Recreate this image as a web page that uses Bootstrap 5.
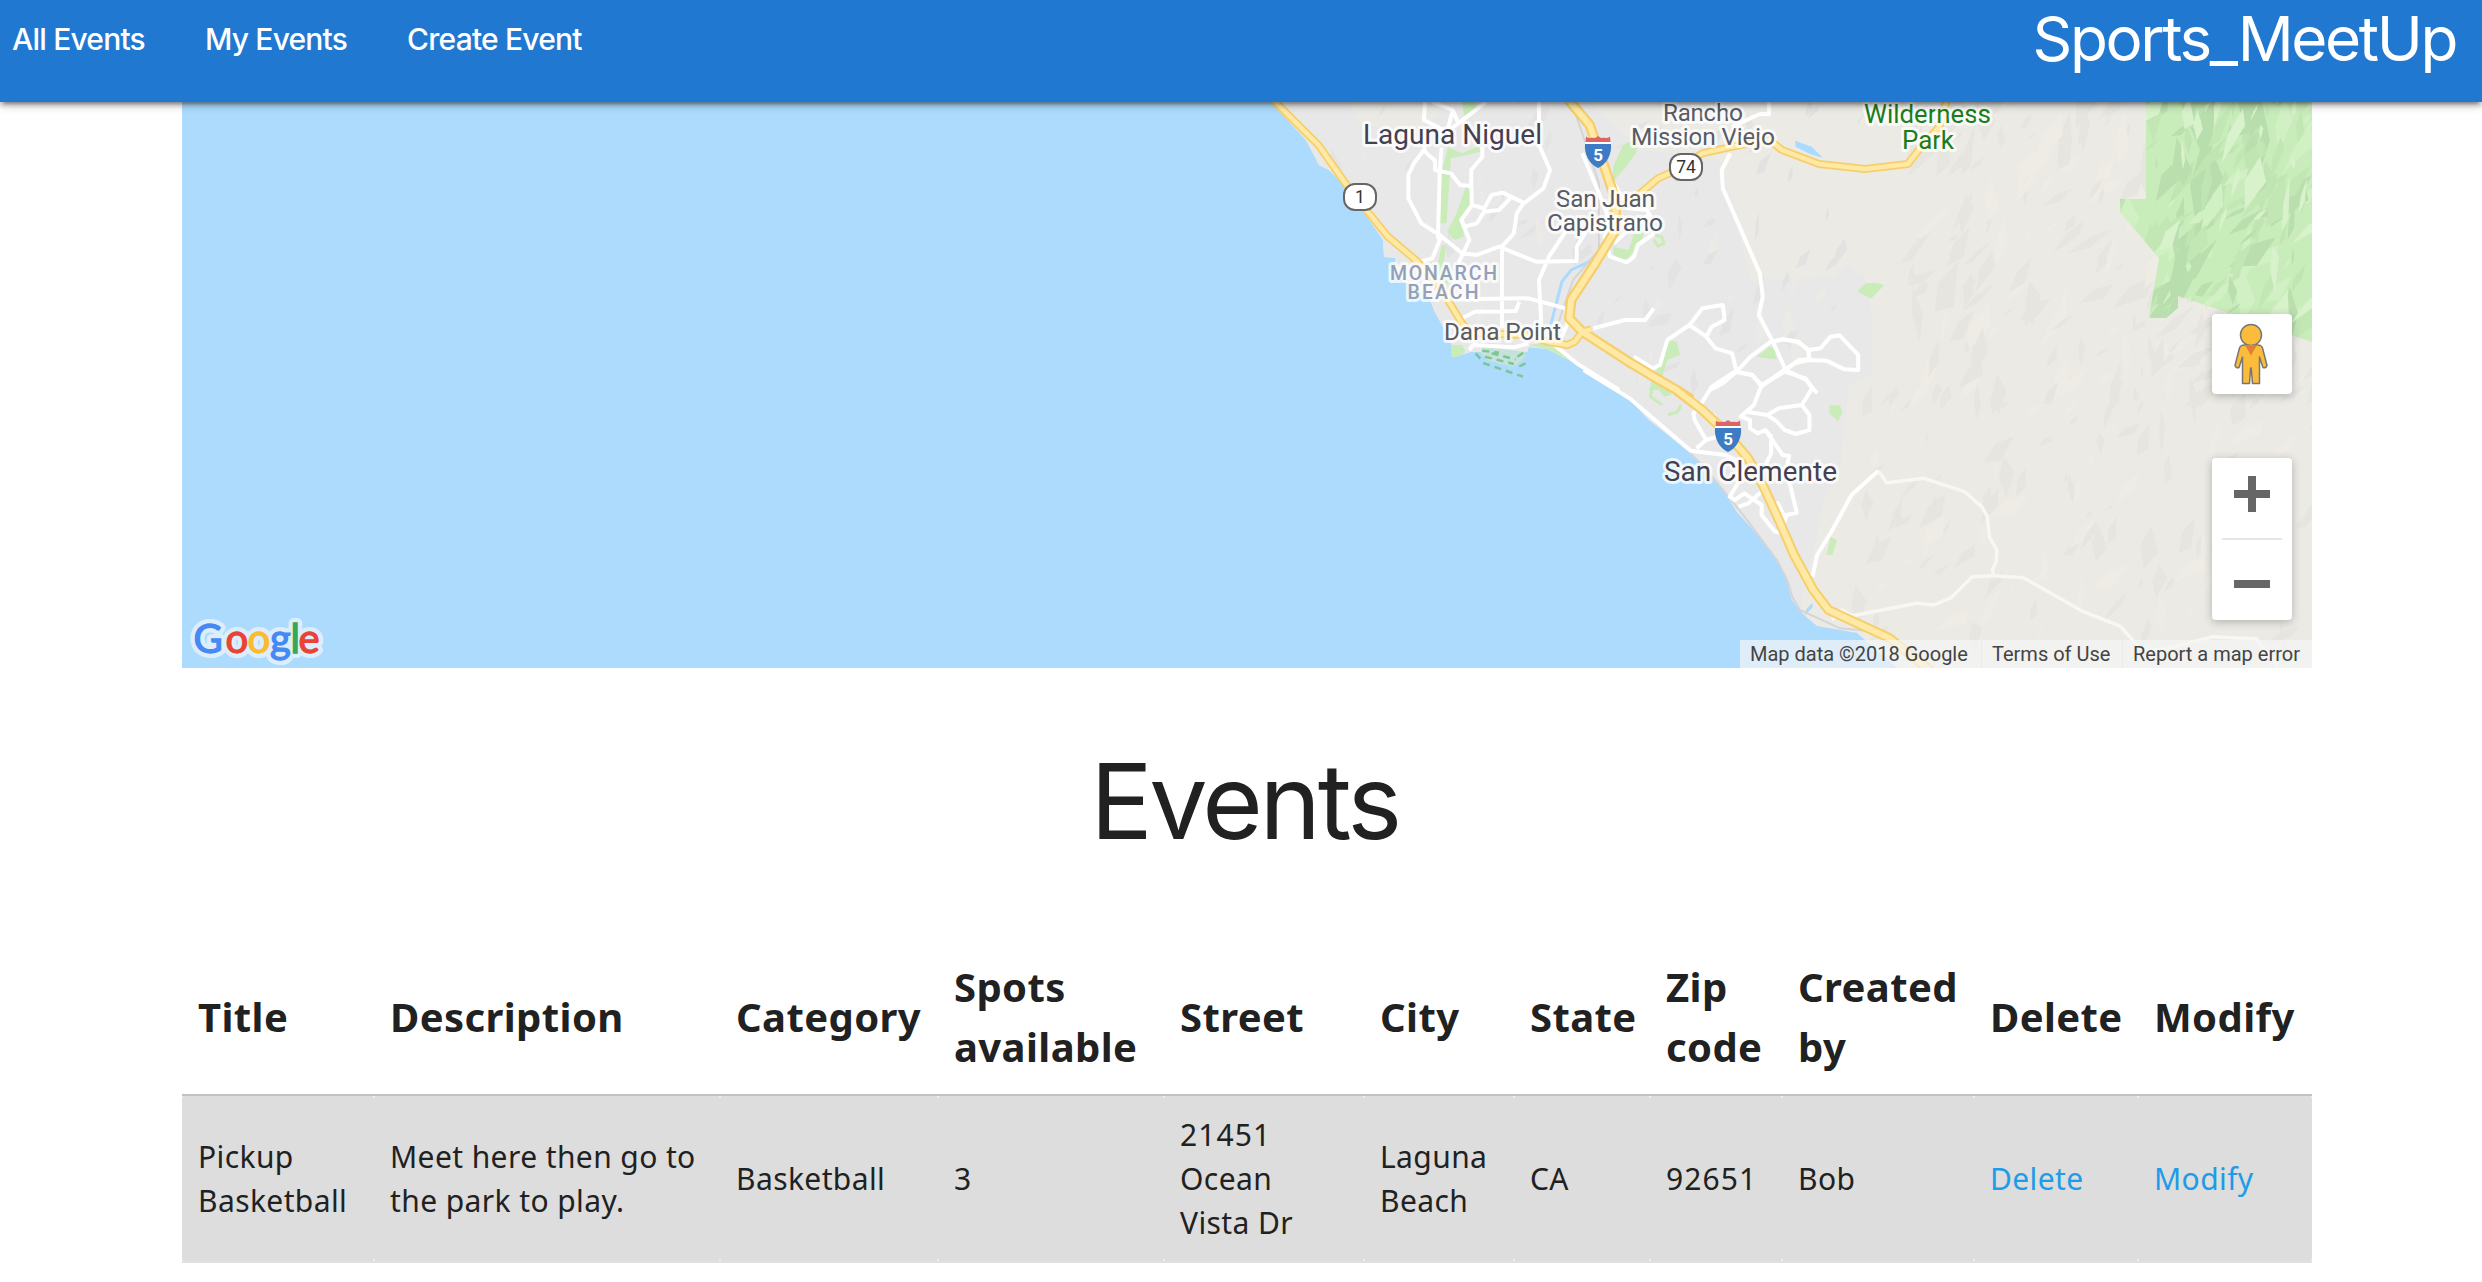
<!DOCTYPE html>
<html lang="en">
<head>
<meta charset="utf-8">
<meta name="viewport" content="width=device-width, initial-scale=1">
<title>Sports_MeetUp</title>
<link rel="stylesheet" href="https://cdn.jsdelivr.net/npm/bootstrap@5.3.0/dist/css/bootstrap.min.css">
<style>
  body { font-family: Inter, "Liberation Sans", sans-serif; color: #212121; background: #fff; overflow: hidden; }
  .topbar { height: 102px; background: #2178d1; padding: 0 26px 0 12px; z-index: 5;
    box-shadow: 0 4px 4px rgba(0,0,0,.16), 0 2px 10px rgba(0,0,0,.28), 0 6px 2px -4px rgba(0,0,0,.2); }
  .topbar .nav-link { font-size: 30px; line-height: 79px; font-weight: 500; letter-spacing: -.8px; color: #fff; padding: 0; }
  .main-links { gap: 60px; }
  .site-name { font-size: 62px; line-height: 78px; letter-spacing: -2.4px; color: #fff; }
  .page { width: 2130px; margin-left: 182px; }
  .map-box { height: 566px; background: #acdbfe; overflow: hidden; }
  .map-box > svg { display: block; }
  .map-box svg path { vector-effect: non-scaling-stroke; }
  .street { fill: none; stroke: #fff; stroke-width: 4; stroke-linejoin: round; }
  .track { fill: none; stroke: #f8f7f3; stroke-width: 3.5; stroke-linejoin: round; }
  .rail { fill: none; stroke: #d3d5d6; stroke-width: 2; }
  .hw-edge { fill: none; stroke: #f6cf6c; stroke-linejoin: round; }
  .hw-core { fill: none; stroke: #ffe9a5; stroke-linejoin: round; }
  .parkland { fill: #c9ecb9; }
  .place { font-family: Roboto, sans-serif; paint-order: stroke; stroke: #fff; stroke-opacity: .75; stroke-width: 6px; stroke-linejoin: round; }
  .map-btns { right: 20px; width: 80px; }
  .map-btn { background: #fff; border-radius: 4px; box-shadow: 0 2px 8px rgba(0,0,0,.25); }
  .peg { top: 212px; height: 80px; }
  .zoomer { top: 356px; height: 162px; }
  .map-credits { right: 0; bottom: 0; height: 28px; width: 572px; font-family: Roboto, sans-serif; font-size: 20px; line-height: 29px; color: #444; }
  .map-credits span { background: rgba(245,245,245,.7); white-space: nowrap; }
  .c-data { width: 241px; padding-left: 10px; margin-right: 1px; }
  .c-terms { width: 140px; padding-left: 10px; margin-right: 1px; }
  .c-report { width: 189px; padding-left: 10px; }
  .events-title { font-size: 104px; line-height: 267px; height: 270px; font-weight: 400; letter-spacing: -3.4px; padding-right: 5px; }
  .events-table { table-layout: fixed; width: 2130px; font-family: "Noto Sans", sans-serif; }
  .events-table th { font-size: 40px; line-height: 60px; font-weight: 700; letter-spacing: .4px; padding: 19px 0 17px 16px; white-space: nowrap; }
  .events-table td { font-size: 30px; line-height: 44px; letter-spacing: .4px; padding: 17px 0 16px 16px; background: #ddd; border-radius: 4px; white-space: nowrap; }
  .events-table .digits { letter-spacing: 1.1px; }
  .events-table thead { border-bottom: 2px solid #c1c1c1; }
  .events-table tbody tr { border-bottom: 2px solid #e0e0e0; }
  .events-table a { color: #1e9be9; text-decoration: none; }
</style>
<script src="https://cdn.jsdelivr.net/npm/bootstrap@5.3.0/dist/js/bootstrap.bundle.min.js"></script>
</head>
<body>
<nav class="topbar d-flex justify-content-between position-relative">
  <div class="main-links d-flex">
    <a class="nav-link" href="#">All Events</a>
    <a class="nav-link" href="#">My Events</a>
    <a class="nav-link" href="#">Create Event</a>
  </div>
  <span class="site-name">Sports_MeetUp</span>
</nav>

<main class="page">
  <div class="map-box position-relative">
    <svg width="2130" height="566" viewBox="182 102 2130 566">
      <defs>
        <path id="land" d="M1271,102L1306,140 1319,165 1329,170 1347,188 1366,215 1383,240 1384,257 1395,258 1397,277 1429,297 1434,310 1443,327 1452,345 1453,357 1471,352 1527,352 1529,347 1547,349 1573,362 1610,387 1630,400 1649,420 1668,435 1689,452 1697,458 1725,493 1737,512 1756,533 1777,560 1786,578 1792,600 1804,615 1817,626 1857,633 1897,668H2312V102Z"/>
        <path id="forest" d="M2146,102V199H2120V212L2159,258 2149,318H2166L2178,308V296L2232,314 2312,342V102Z"/>
        <path id="shield" d="M-13,-7.5H13C14,2 9,13 0,16.500C-9,13 -14,2 -13,-7.500Z"/>
        <path id="crown" d="M-12.500,-9.500L-12,-15Q-9,-12.500 -6,-14Q-3,-12.500 0,-15.500Q3,-12.500 6,-14Q9,-12.500 12,-15L12.500,-9.500Z"/>
        <clipPath id="landClip"><use href="#land"/></clipPath>
        <clipPath id="forestClip"><use href="#forest"/></clipPath>
      </defs>
      <use href="#land" fill="#ebeae4"/>
      <path fill="#e8e8e8" clip-path="url(#landClip)" d="M1265,95H1345L1360,125 1420,130 1450,102H1590L1640,150 1690,155 1720,160 1730,195 1751,282 1834,277 1846,265 1866,277 1872,323V373L1850,385 1849,383 1840,470 1825,497 1815,543 1803,590V620L1790,640 1265,400Z"/>
      <g id="relief" clip-path="url(#landClip)"></g>
      <use href="#forest" fill="#c8ecba"/>
      <g clip-path="url(#forestClip)">
        <path fill="#b9deae" d="M2180,102L2200,150 2190,185 2196,225 2178,240 2172,275 2164,300 2152,318H2168L2180,306 2190,285 2202,262 2198,235 2214,225 2212,195 2224,180 2212,150 2215,102ZM2238,102L2246,140 2262,165 2270,140 2262,102Z"/>
        <g id="forestRelief"></g>
      </g>

      <!-- Laguna Niguel, Dana Point, San Juan Capistrano -->
      <g transform="translate(1240 90) scale(.37 .33333)">
        <path class="parkland" d="M600,36L640,36 635,65 605,78ZM562,172L600,190 645,168 650,185 600,198 570,205 558,400 540,400 545,250ZM610,290L622,300 620,350 602,400 605,440 580,450 560,425 585,370ZM545,465L557,468 550,520 575,580 540,580 535,520ZM1035,165L1080,140 1070,190 1040,235 1005,280 1010,225ZM1010,470L1050,480 1065,430 1095,420 1085,450 1050,505 1030,512 1008,490ZM570,765L600,765 610,785 590,800 572,800ZM1160,750L1180,755 1190,795 1155,810 1130,900H1105L1130,830ZM1400,800L1430,770 1450,780 1445,808ZM780,765L820,758 850,775 930,835 900,815 830,778Z"/>
        <path fill="#c6e3d9" d="M655,770L770,785 772,800 740,830 670,812 650,790Z"/>
        <path fill="none" stroke="#7cc694" stroke-width="2.500" stroke-dasharray="7 5" d="M637,790L660,820 765,860M772,820L745,835M655,782L700,788 M750,800L770,785M662,800L740,822M680,790L745,808"/>
        <path fill="none" stroke="#c9ecb9" stroke-width="3" d="M1120,435L1140,440 1145,460 1130,468 1118,450"/>
        <path fill="#aadaff" d="M1500,152L1545,170 1575,203 1540,192 1502,170Z"/>
        <path fill="none" stroke="#aadaff" stroke-width="3" d="M840,705L870,575 895,540 945,515 975,485"/>
        <path class="rail" d="M900,50L925,130 970,280 970,480 900,570 860,700"/>
        <path class="street" d="M500,36L497,90 560,125 590,100 665,36M520,36L575,60 590,100M575,60L560,125M497,180L470,220 455,255V325L490,400 540,435 600,490 640,495 700,470 800,515 910,513V470L935,425M497,165L500,185 527,212V240L570,250 595,285 625,288 625,240 655,200V170M545,172L540,240 535,440 540,450 520,505 485,515M625,288L627,345 660,355 680,315 710,308 770,340M627,345L598,390 607,410 640,400 660,365 700,360 730,325M598,390L620,450 590,520M808,36V165L838,240 820,295 765,342 748,370 740,430 708,470V715M880,425L835,500 808,570 815,715M590,628L780,625 880,655M600,685L635,665 745,663 755,635M925,190L985,350 1000,400 985,440 1000,500 1045,517 1065,500 1075,465 1120,430M1010,280L1050,355 1100,360 1110,380M1010,460L1060,410 1110,370M880,655L885,700 870,740M955,715L1040,690 1095,690 1118,655M1430,36V72L1405,72 1330,110M1325,190L1302,240 1305,295 1405,550 1413,620 1402,675 1440,755M1440,755L1475,840 1530,870 1560,910M1065,800L1115,835 1135,825 1155,750 1215,705 1250,655 1305,645 1310,690 1275,710 1260,740 1215,705M1260,740L1285,775 1330,790 1342,845 1385,855 1410,890M1270,900L1305,880 1342,845 1380,800 1435,755 1465,748 1510,755 1535,780 1540,808 1510,810 1475,840 1405,890M620,780L630,765 740,772 780,760M850,765L910,820 1025,900"/>
      </g>
      <!-- inland hills -->
      <g transform="translate(1700 90) scale(.39545 .33333)">
        <path class="parkland" d="M397,604L420,580 445,578 466,585 432,626ZM142,800L182,772 195,808Z"/>
        <path class="street" d="M185,755L210,748 245,755 275,780 305,775 330,740 353,736 400,795V840L365,838 320,812 275,810 240,820 212,840 155,890M275,780V810"/>
      </g>
      <!-- San Clemente and the coast to the south -->
      <g transform="translate(1400 370) scale(.38265 .33333)">
        <path class="parkland" d="M1122,105L1150,107 1156,125 1145,155 1122,130ZM1125,500L1142,510 1130,555 1115,555ZM665,40L700,60 710,75 690,80Z"/>
        <path fill="none" stroke="#c9ecb9" stroke-width="3" d="M685,0L660,40 655,80 685,105M735,105L725,125 700,135"/>
        <path fill="#aadaff" d="M1078,698V712L1058,737 1062,718Z"/>
        <path class="rail" d="M755,245L820,325 900,440 985,570 1012,630 1025,680 1045,720 1150,775 1250,785"/>
        <path class="street" d="M480,0L600,85 760,242 850,255 880,270M875,5L815,50 785,105 800,130 825,140M875,5L920,15 945,45 925,105 890,140 915,150 915,175 935,190 955,180 970,200V250L955,285M945,45L1005,5 1060,25 1077,55 1050,105 990,115 960,135 905,125M1050,105L1070,135V180L1035,192 1005,180 985,155 960,135M785,105L767,130 770,150 800,210 775,235M800,210L830,200M955,180L1000,255 1017,258 1010,300 1037,428 1010,435 1005,455M885,335L862,380 875,390 900,370 945,405V435L980,485 1000,490M945,365L910,400 885,410M1000,490L1005,440 985,395M1078,620L1090,555 1130,480 1180,375 1250,302"/>
        <path class="track" d="M1250,302L1272,338 1370,325 1475,365 1520,410 1535,440 1540,500 1560,540 1558,575 1548,600 1552,615M1130,750L1155,720 1180,738 1350,700 1395,705 1440,683 1495,620 1550,617"/>
      </g>
      <g transform="translate(1940 290) scale(.33333)">
        <path class="track" d="M160,857L250,863 430,965 540,1008 600,1075 660,1080 820,1040 950,1047 1015,1130"/>
      </g>
      <!-- highways: edges first, then the lighter core -->
      <g class="hw-edge" transform="translate(1240 90) scale(.37 .33333)">
        <path stroke-width="8" d="M90,30L212,165 285,280 345,365 400,440 480,515 540,590 600,700 625,730 780,735 830,755 885,765 905,755 925,725 950,718M1015,352L1050,340 1130,265 1170,245 1250,190 1330,170 1430,150 1465,180 1565,222 1690,237 1805,222 1845,165 1890,110 1910,30"/>
        <path stroke-width="10.500" d="M888,30L945,105 985,230 1015,330 1015,420 960,520 895,630 890,685 925,725 1050,815 1125,865 1180,900 1220,928"/>
      </g>
      <path class="hw-edge" stroke-width="10" transform="translate(1400 370) scale(.38265 .33333)" d="M723,62L790,120 850,185 910,265 950,350 990,450 1030,555 1080,660 1120,720 1280,805 1390,905"/>
      <g class="hw-core" transform="translate(1240 90) scale(.37 .33333)">
        <path stroke-width="4.500" d="M90,30L212,165 285,280 345,365 400,440 480,515 540,590 600,700 625,730 780,735 830,755 885,765 905,755 925,725 950,718M1015,352L1050,340 1130,265 1170,245 1250,190 1330,170 1430,150 1465,180 1565,222 1690,237 1805,222 1845,165 1890,110 1910,30"/>
        <path stroke-width="6" d="M888,30L945,105 985,230 1015,330 1015,420 960,520 895,630 890,685 925,725 1050,815 1125,865 1180,900"/>
      </g>
      <path class="hw-core" stroke-width="6" stroke-linecap="round" transform="translate(1400 370) scale(.38265 .33333)" d="M723,60L790,120 850,185 910,265 950,350 990,450 1030,555 1080,660 1120,720 1280,805 1390,905"/>

      <!-- place names -->
      <g class="place" fill="#45404f" font-size="28">
        <text x="1363" y="143.500" textLength="179">Laguna Niguel</text>
        <text x="1664" y="480.500" textLength="173">San Clemente</text>
      </g>
      <g class="place" fill="#585b66" font-size="24.500">
        <text x="1663" y="121" textLength="80">Rancho</text>
        <text x="1631" y="144.500" textLength="144">Mission Viejo</text>
        <text x="1556" y="206.500" textLength="99">San Juan</text>
        <text x="1547" y="230.500" textLength="116">Capistrano</text>
        <text x="1444" y="339.500" textLength="117">Dana Point</text>
      </g>
      <g class="place" fill="#93a0b8" font-size="19.500" font-weight="500">
        <text x="1390" y="280" textLength="107">MONARCH</text>
        <text x="1407.500" y="299" textLength="71">BEACH</text>
      </g>
      <g class="place" fill="#1b7d1b" font-size="26">
        <text x="1864" y="123" textLength="127">Wilderness</text>
        <text x="1902" y="149" textLength="52">Park</text>
      </g>
      <!-- route markers -->
      <g font-family="Roboto, sans-serif" text-anchor="middle">
        <g fill="#fff" stroke="#666" stroke-width="2">
          <rect x="1344" y="184" width="32" height="26" rx="11"/>
          <rect x="1670" y="154" width="32" height="26" rx="11"/>
        </g>
        <text x="1360" y="203" font-size="17.500" fill="#333">1</text>
        <text x="1686" y="173" font-size="17.500" fill="#333">74</text>
        <g transform="translate(1598 151.500)"><use href="#shield" fill="#3d7bc4"/><use href="#crown" fill="#dc6464"/><path fill="#fff" d="M-13,-9.500H13V-7.500H-13Z"/><text y="9" font-size="17" font-weight="700" fill="#fff">5</text></g>
        <g transform="translate(1728 435.500)"><use href="#shield" fill="#3d7bc4"/><use href="#crown" fill="#dc6464"/><path fill="#fff" d="M-13,-9.500H13V-7.500H-13Z"/><text y="9" font-size="17" font-weight="700" fill="#fff">5</text></g>
      </g>
      <!-- Google mark -->
      <g font-family="Lato, sans-serif" font-size="40">
        <g fill="none" stroke="#dceefc" stroke-width="10" stroke-linejoin="round">
          <text x="193.500" y="652.500">G</text><text x="225.500" y="652.500">o</text><text x="247.500" y="652.500">o</text><text x="270" y="652.500">g</text><text x="290.500" y="652.500">l</text><text x="298.500" y="652.500">e</text>
        </g>
        <g stroke-width="1.300">
          <text x="193.500" y="652.500" fill="#4688f4" stroke="#4688f4">G</text><text x="225.500" y="652.500" fill="#e94335" stroke="#e94335">o</text><text x="247.500" y="652.500" fill="#fabb2d" stroke="#fabb2d">o</text><text x="270" y="652.500" fill="#4688f4" stroke="#4688f4">g</text><text x="290.500" y="652.500" fill="#34a853" stroke="#34a853">l</text><text x="298.500" y="652.500" fill="#e94335" stroke="#e94335">e</text>
        </g>
      </g>
    </svg>

    <div class="map-btns map-btn peg position-absolute">
      <svg width="80" height="80" viewBox="2212 314 80 80">
        <g fill="#fbbc3c" stroke="#777" stroke-width="1.500" stroke-linejoin="round">
          <path d="M2241.500,345.500Q2251,343.500 2260.500,345.500Q2262,346.500 2262.500,348L2267,365.500Q2266,368.500 2263,367.500L2259.500,357V383.500H2252.500L2251.200,368H2250.600L2249.500,383.500H2242.500V357L2239,367.500Q2236,368.500 2235,365.500L2239.500,348Q2240,346.500 2241.500,345.500Z"/>
          <circle cx="2251" cy="335" r="10.500"/>
        </g>
        <path fill="#e17f37" d="M2245,345H2257L2251,355.500Z"/>
      </svg>
    </div>
    <div class="map-btns map-btn zoomer position-absolute">
      <svg width="80" height="162" viewBox="0 0 80 162">
        <path fill="#666" d="M22,32H36V18H44V32H58V40H44V54H36V40H22ZM22,122H58V130H22Z"/>
        <path fill="#e6e6e6" d="M10,80H70V82H10Z"/>
      </svg>
    </div>
    <div class="map-credits d-flex position-absolute">
      <span class="c-data">Map data ©2018 Google</span><span class="c-terms">Terms of Use</span><span class="c-report">Report a map error</span>
    </div>
  </div>

  <h1 class="events-title text-center mb-0">Events</h1>

  <table class="events-table align-middle">
    <colgroup>
      <col style="width:192px"><col style="width:346px"><col style="width:218px"><col style="width:226px"><col style="width:200px"><col style="width:150px"><col style="width:136px"><col style="width:132px"><col style="width:192px"><col style="width:164px"><col style="width:174px">
    </colgroup>
    <thead>
      <tr><th>Title</th><th>Description</th><th>Category</th><th>Spots<br>available</th><th>Street</th><th>City</th><th>State</th><th>Zip<br>code</th><th>Created<br>by</th><th>Delete</th><th>Modify</th></tr>
    </thead>
    <tbody>
      <tr>
        <td>Pickup<br>Basketball</td>
        <td>Meet here then go to<br>the park to play.</td>
        <td>Basketball</td>
        <td>3</td>
        <td><span class="digits">21451</span><br>Ocean<br>Vista Dr</td>
        <td>Laguna<br>Beach</td>
        <td>CA</td>
        <td class="digits">92651</td>
        <td>Bob</td>
        <td><a href="#">Delete</a></td>
        <td><a href="#">Modify</a></td>
      </tr>
    </tbody>
  </table>
</main>

<script>
  // Hillshade facets: small slanted shards from a fixed seed.
  let seed = 7;
  const rnd = () => (seed = (seed * 16807) % 2147483647) / 2147483647;
  function shade(id, n, x0, y0, x1, y1, colours, size) {
    const byColour = colours.map(() => '');
    for (let i = 0; i < n; i++) {
      const x = x0 + rnd() * (x1 - x0), y = y0 + rnd() * (y1 - y0);
      const a = -0.5 - rnd() * 1.2, l = size * (0.3 + rnd() * 1.3), w = l * (0.08 + rnd() * 0.2);
      const c = Math.cos(a), s = Math.sin(a), k = 0.2 + rnd() * 0.6;
      byColour[i % colours.length] += `M${x.toFixed(1)},${y.toFixed(1)}l${(l*k*c - w*s).toFixed(1)},${(l*k*s + w*c).toFixed(1)} ${(l*(1-k)*c + w*s).toFixed(1)},${(l*(1-k)*s - w*c).toFixed(1)} ${(-l*0.5*c + w*s*0.6).toFixed(1)},${(-l*0.5*s - w*c*0.6).toFixed(1)}Z`;
    }
    document.getElementById(id).innerHTML += byColour.map((d, i) => `<path fill="${colours[i]}" d="${d}"/>`).join('');
  }
  shade('relief', 110, 1290, 102, 1860, 400, ['#e3e3e3', '#ebeae6', '#e2e2e2'], 22);
  shade('relief', 260, 1900, 102, 2312, 430, ['#e6e5e0', '#efece6', '#e6e5df'], 36);
  shade('relief', 120, 1850, 400, 2312, 668, ['#e6e5e0', '#efece6', '#e6e5df'], 28);
  shade('forestRelief', 170, 2110, 102, 2312, 345, ['#c0e5b3', '#d1f0c4', '#badeae', '#c2e7b5', '#d8f2cb'], 38);
</script>
</body>
</html>
